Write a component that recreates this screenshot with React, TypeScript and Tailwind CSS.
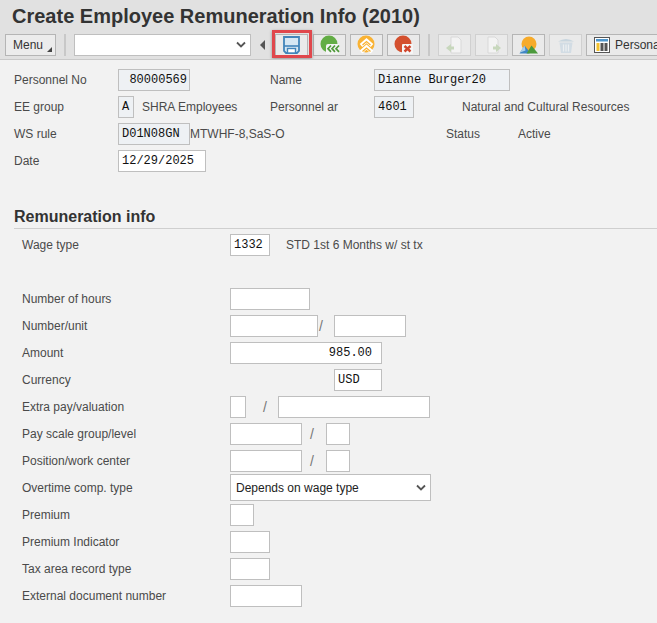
import React from "react";

const MONO = "font-['Liberation_Mono','DejaVu_Sans_Mono',monospace] text-[12px] text-[#111]";

function Box({ w, v = "", ro = false, right = false, cls = "" }: { w: string; v?: string; ro?: boolean; right?: boolean; cls?: string }) {
  return (
    <div className={`${w} h-[22px] shrink-0 border border-[#bfbfbf] flex items-center px-[3px] ${ro ? "bg-[#eef1f4]" : "bg-white"} ${right ? "justify-end pr-[9px]" : ""} ${MONO} ${cls}`}>
      {v}
    </div>
  );
}

function Lbl({ children, w = "" }: { children: React.ReactNode; w?: string }) {
  return <div className={`${w} shrink-0 text-[12px] leading-[22px] text-[#4a4a4a] whitespace-nowrap`}>{children}</div>;
}

function TB({ children, dim = false }: { children: React.ReactNode; dim?: boolean }) {
  return (
    <div className={`w-[33px] h-[22px] shrink-0 border flex items-center justify-center bg-[#eaeaea] ${dim ? "border-[#d0d0d0]" : "border-[#b5b5b5]"}`}>
      {children}
    </div>
  );
}

function Sep() {
  return <div className="w-[2px] h-[22px] bg-[#c8c8c8] shrink-0" />;
}

const Save = () => (
  <svg width="17" height="18" viewBox="0 0 17 18" fill="none">
    <path d="M1 1h15v14l-2 2H3l-2-2z" fill="#d6e7f3" stroke="#4285ba" strokeWidth="1.800" />
    <path d="M1 10h15" stroke="#4285ba" strokeWidth="1.600" />
    <rect x="4.500" y="12.500" width="8" height="4.500" fill="#fff" stroke="#4285ba" strokeWidth="1.400" />
  </svg>
);

const Round = ({ fill, dir }: { fill: string; dir: "back" | "up" | "x" }) => (
  <svg width="20" height="20" viewBox="0 0 20 20">
    <circle cx="9" cy="9" r="8.500" fill={fill} />
    {dir === "back" && (
      <g>
        <path d="M6 19V11q0-2 2-2h11v10z" fill="#f4f4f4" />
        <path d="M11 10.500l-3 3.200 3 3.200M15 10.500l-3 3.200 3 3.200M19 10.500l-3 3.200 3 3.200" stroke="#4f9a3a" strokeWidth="1.700" fill="none" />
      </g>
    )}
    {dir === "up" && (
      <g>
        <path d="M4 10.500l5.500-5 5.500 5M4 17l5.500-5 5.500 5" stroke="#fff" strokeWidth="3.800" fill="none" />
        <path d="M5.500 10l4-3.500 4 3.500M5.500 16.500l4-3.500 4 3.500" stroke={fill} strokeWidth="1.300" fill="none" />
      </g>
    )}
    {dir === "x" && (
      <g>
        <rect x="8" y="9" width="11" height="10" rx="1" fill="#f6f6f6" />
        <path d="M10.500 11l6 5.500M16.500 11l-6 5.500" stroke="#d0452c" strokeWidth="2.400" />
      </g>
    )}
  </svg>
);

const Doc = ({ right }: { right?: boolean }) => (
  <svg width="20" height="18" viewBox="0 0 20 18" opacity="0.7">
    <path d="M6 1h7l3 3v13H6z" fill="#f8f8f8" stroke="#d2d2d2" />
    {right ? (
      <path d="M11 10.500h3V8l5 4-5 4v-2.500h-3z" fill="#b9cfa9" />
    ) : (
      <path d="M9 10.500H6V8l-5 4 5 4v-2.500h3z" fill="#b9cfa9" />
    )}
  </svg>
);

const Mount = () => (
  <svg width="20" height="20" viewBox="0 0 20 20">
    <circle cx="10" cy="9" r="7.500" fill="#f7ab2a" />
    <path d="M0.500 18.500l5-8 4 5 1 3z" fill="#3f86c4" />
    <path d="M1 17.500l4.500-7 1 5z" fill="#a9cde8" />
    <path d="M7.500 18.500l5-8 6.500 8z" fill="#4b9a3c" />
  </svg>
);

const Trash = () => (
  <svg width="20" height="18" viewBox="0 0 20 18" opacity="0.65">
    <path d="M2 5.500q8-5 16 0z" fill="#b6cbd9" />
    <path d="M3.500 6.500h13l-1.500 10.500h-10z" fill="#c6d6e2" />
    <path d="M7.500 8.500v7M10 8.500v7M12.500 8.500v7" stroke="#eef3f6" strokeWidth="1.200" />
  </svg>
);

const Layout = () => (
  <svg width="16" height="16" viewBox="0 0 16 16">
    <rect x="0.500" y="0.500" width="15" height="15" fill="#fff" stroke="#555" />
    <rect x="2" y="2" width="12" height="2.500" fill="#4f96cc" />
    <rect x="2.500" y="6" width="3" height="8" fill="#f2c230" />
    <rect x="6.500" y="6" width="3" height="8" fill="#555" />
    <rect x="10.500" y="6" width="3" height="8" fill="#555" />
  </svg>
);

function Row({ label, children }: { label: string; children?: React.ReactNode }) {
  return (
    <div className="flex items-center h-[22px] mb-[5px] pl-[22px]">
      <Lbl w="w-[208px]">{label}</Lbl>
      {children}
    </div>
  );
}

const Slash = ({ w }: { w: string }) => (
  <div className={`${w} shrink-0 text-[14px] text-[#777]`}>/</div>
);

export default function App() {
  return (
    <div className="w-[657px] h-[623px] overflow-hidden bg-[#f2f2f2] font-['Liberation_Sans',Arial,sans-serif]">
      <div className="h-[60px] bg-[#e1e1e1] border-b border-[#c9c9c9] overflow-hidden">
        <div className="pl-[12px] pt-[3px] h-[30px] text-[20px] leading-[26px] font-bold text-[#333]">Create Employee Remuneration Info (2010)</div>
        <div className="flex items-center pl-[5px] h-[28px] pt-[2px]">
          <div className="w-[51px] h-[22px] border border-[#b5b5b5] bg-[#ececec] relative text-[12px] leading-[20px] pl-[7px] text-[#333] shrink-0">
            Menu
            <span className="absolute right-[3px] bottom-[3px] w-0 h-0 border-l-[5px] border-l-transparent border-b-[5px] border-b-[#444]" />
          </div>
          <div className="ml-[8px]"><Sep /></div>
          <div className="ml-[8px] w-[177px] h-[22px] bg-white border border-[#bfbfbf] relative shrink-0">
            <svg className="absolute right-[4px] top-[6px]" width="10" height="8" viewBox="0 0 10 8">
              <path d="M1 1.500l4 4 4-4" fill="none" stroke="#555" strokeWidth="1.800" />
            </svg>
          </div>
          <div className="ml-[9px] w-0 h-0 border-y-[5px] border-y-transparent border-r-[5px] border-r-[#555] shrink-0" />
          <div className="ml-[10px] relative shrink-0">
            <TB><Save /></TB>
            <div className="absolute left-[-3px] top-[-4px] w-[40px] h-[28px] border-[3px] border-[#e0474c] shadow-[0_1px_3px_rgba(0,0,0,0.35)]" />
          </div>
          <div className="ml-[5px] flex items-center gap-[4px]">
            <TB><Round fill="#63ad45" dir="back" /></TB>
            <TB><Round fill="#f9b233" dir="up" /></TB>
            <TB><Round fill="#d4502e" dir="x" /></TB>
          </div>
          <div className="ml-[8px]"><Sep /></div>
          <div className="ml-[8px] flex items-center gap-[4px]">
            <TB dim><Doc /></TB>
            <TB dim><Doc right /></TB>
            <TB><Mount /></TB>
            <TB dim><Trash /></TB>
          </div>
          <div className="ml-[4px] h-[22px] w-[80px] shrink-0 border border-[#b5b5b5] bg-[#eaeaea] flex items-center pl-[7px] gap-[5px] text-[12px] text-[#333] whitespace-nowrap overflow-hidden">
            <Layout />
            Persona
          </div>
        </div>
      </div>

      <div className="pl-[14px] pt-[9px]">
        <div className="flex items-center h-[22px] mb-[5px]">
          <Lbl w="w-[104px]">Personnel No</Lbl>
          <Box w="w-[72px]" v="80000569" ro cls="justify-end pr-[2px]" />
          <Lbl w="w-[104px] ml-[80px]">Name</Lbl>
          <Box w="w-[136px]" v="Dianne Burger20" ro />
        </div>
        <div className="flex items-center h-[22px] mb-[5px]">
          <Lbl w="w-[104px]">EE group</Lbl>
          <Box w="w-[16px]" v="A" ro />
          <Lbl w="w-[128px] ml-[8px]">SHRA Employees</Lbl>
          <Lbl w="w-[104px]">Personnel ar</Lbl>
          <Box w="w-[40px]" v="4601" ro />
          <Lbl w="ml-[48px]">Natural and Cultural Resources</Lbl>
        </div>
        <div className="flex items-center h-[22px] mb-[5px]">
          <Lbl w="w-[104px]">WS rule</Lbl>
          <Box w="w-[72px]" v="D01N08GN" ro />
          <Lbl w="w-[256px]">MTWHF-8,SaS-O</Lbl>
          <Lbl w="w-[72px]">Status</Lbl>
          <Lbl>Active</Lbl>
        </div>
        <div className="flex items-center h-[22px]">
          <Lbl w="w-[104px]">Date</Lbl>
          <Box w="w-[88px]" v="12/29/2025" />
        </div>
      </div>

      <div className="ml-[14px] mt-[32px] h-[25px] pt-[1px] border-b border-[#cfcfcf] text-[16px] leading-[24px] font-bold text-[#333]">Remuneration info</div>

      <div className="pt-[5px]">
        <Row label="Wage type">
          <Box w="w-[40px]" v="1332" />
          <Lbl w="ml-[16px]">STD 1st 6 Months w/ st tx</Lbl>
        </Row>
        <div className="h-[27px]" />
        <Row label="Number of hours"><Box w="w-[80px]" /></Row>
        <Row label="Number/unit">
          <Box w="w-[88px]" />
          <Slash w="w-[16px] pl-[1px]" />
          <Box w="w-[72px]" />
        </Row>
        <Row label="Amount"><Box w="w-[152px]" v="985.00" right /></Row>
        <Row label="Currency">
          <div className="w-[104px] shrink-0" />
          <Box w="w-[48px]" v="USD" />
        </Row>
        <Row label="Extra pay/valuation">
          <Box w="w-[16px]" />
          <Slash w="w-[32px] pl-[17px]" />
          <Box w="w-[152px]" />
        </Row>
        <Row label="Pay scale group/level">
          <Box w="w-[72px]" />
          <Slash w="w-[24px] pl-[8px]" />
          <Box w="w-[24px]" />
        </Row>
        <Row label="Position/work center">
          <Box w="w-[72px]" />
          <Slash w="w-[24px] pl-[8px]" />
          <Box w="w-[24px]" />
        </Row>
        <div className="flex items-center h-[27px] mb-[3px] pl-[22px] -mt-[3px]">
          <Lbl w="w-[208px]">Overtime comp. type</Lbl>
          <div className="w-[201px] h-[27px] bg-white border border-[#bfbfbf] flex items-center justify-between pl-[5px] pr-[4px] text-[12px] text-[#222] shrink-0">
            Depends on wage type
            <svg width="10" height="8" viewBox="0 0 10 8">
              <path d="M1 1.500l4 4 4-4" fill="none" stroke="#555" strokeWidth="1.800" />
            </svg>
          </div>
        </div>
        <Row label="Premium"><Box w="w-[24px]" /></Row>
        <Row label="Premium Indicator"><Box w="w-[40px]" /></Row>
        <Row label="Tax area record type"><Box w="w-[40px]" /></Row>
        <Row label="External document number"><Box w="w-[72px]" /></Row>
      </div>
    </div>
  );
}
